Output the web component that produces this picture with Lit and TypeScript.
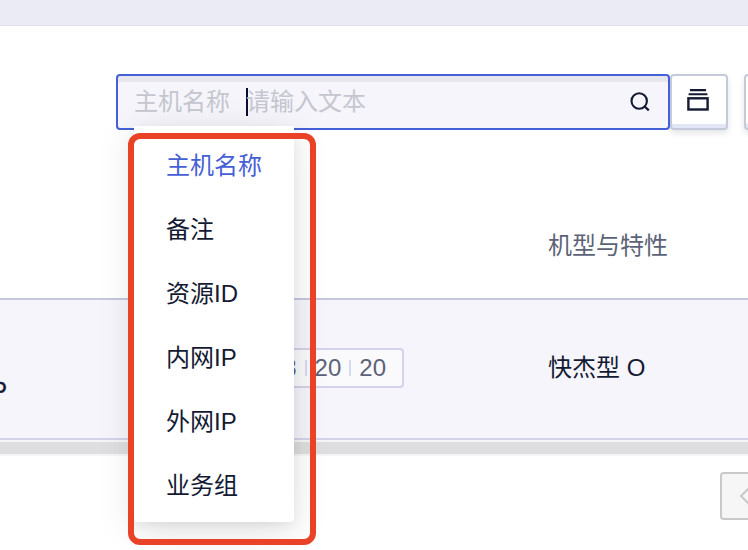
import { LitElement, html, css, svg } from "lit";
import { customElement, property } from "lit/decorators.js";
import { classMap } from "lit/directives/class-map.js";

const searchIcon = svg`<svg width="20" height="20" viewBox="0 0 20 20" fill="none" stroke="#141a33" stroke-width="2.1"><circle cx="9.2" cy="9" r="7.7"/><path d="M14.4 14.2L18.8 18.4" stroke-width="2.2"/></svg>`;
const stackIcon = svg`<svg width="22" height="22" viewBox="0 0 22 22" fill="none" stroke="#141a33" stroke-width="2.1"><path d="M3 1.1H19M1.6 5.2H20.4"/><rect x="1.4" y="9.3" width="19.2" height="11.2" stroke-width="2.4"/></svg>`;
const chevron = svg`<svg width="16" height="20" viewBox="0 0 16 20" fill="none" stroke="#c9c9c9" stroke-width="2"><path d="M11 1L2 10L11 19"/></svg>`;

@customElement("search-menu")
class SearchMenu extends LitElement {
  @property({ type: Array }) items: string[] = [];
  @property() selected = "";
  static styles = css`
    :host { display: block; background: #fff; height: 396px; width: 160px; box-sizing: border-box; padding-top: 8px;
      border-radius: 0 0 4px 4px; box-shadow: 0 4px 10px rgba(0,0,0,.05), 0 8px 36px rgba(0,0,0,.13); }
    .item { height: 64px; line-height: 64px; padding-left: 32px; font-size: 24px; color: #141a33; white-space: nowrap; }
    .on { color: #4560d6; }
  `;
  render() {
    return this.items.map(
      (i) => html`<div class=${classMap({ item: true, on: i === this.selected })}>${i}</div>`
    );
  }
}

@customElement("app-root")
class AppRoot extends LitElement {
  static styles = css`
    * { box-sizing: border-box; }
    :host { display: block; position: relative; width: 748px; height: 550px; overflow: hidden; background: #fff;
      font-family: "Liberation Sans", "Noto Sans CJK SC", sans-serif; font-size: 24px; color: #141a33; }
    svg { display: block; }
    .top { height: 26px; background: #ebebf5; border-bottom: 1px solid #dfdfe6; }
    .toolbar { display: flex; height: 104px; padding: 48px 0 0 116px; }
    .field { position: relative; flex: none; width: 554px; height: 56px; display: flex; align-items: center; padding: 0 18px 0 16px;
      border: 2px solid #4560d6; border-radius: 4px; background: #f5f5fb; box-shadow: inset 0 6px 0 #e7e6ec; color: #c5c6cf; }
    .key { width: 112px; line-height: 52px; }
    .caret { width: 2px; height: 28px; background: #071030; }
    .hint { flex: 1; margin-left: -2px; line-height: 52px; }
    search-menu { position: absolute; left: 16px; top: 50px; z-index: 2; }
    .btn { flex: none; width: 58px; height: 56px; display: flex; justify-content: center; padding: 13px 2px 0 0; border: 2px solid #c5cadb;
      border-radius: 4px; background: #fff; box-shadow: inset 0 -4px 0 #e3e6f6, 0 3px 6px rgba(20,26,51,.12); }
    .next { margin-left: 16px; }
    .head { height: 170px; border-bottom: 2px solid #c4c8dc; padding: 98px 0 0 548px; line-height: 36px; color: #5c6378; }
    .row { display: grid; grid-template-columns: 204px 344px 200px; align-items: center; height: 140px; background: #f5f5fb; border-bottom: 2px solid #d3d3e9; }
    .ip { margin: 44px 0 0 -9px; font-size: 24px; line-height: 30px; -webkit-text-stroke: .4px #141a33; }
    .model { line-height: 36px; margin-top: -2px; }
    .specs { width: 200px; height: 40px; margin-top: -2px; display: flex; justify-content: flex-end; align-items: center; padding-right: 16px;
      border: 2px solid #d3d3e9; border-radius: 4px; background: #fafafd; color: #5c6378; }
    .sep { width: 2px; height: 16px; margin: 0 8px; background: #d5dbee; }
    .scroll { height: 16px; border: solid #f6f6f8; border-width: 2px 0; background: #dedede; }
    .foot { display: flex; justify-content: flex-end; padding-top: 16px; }
    .page { flex: none; width: 48px; height: 48px; margin-right: -20px; display: flex; align-items: center; justify-content: center; padding-left: 5px;
      border: 2px solid #c9c9c9; border-radius: 4px; background: #f6f6f6; }
    .mark { position: absolute; left: 128px; top: 133px; width: 188px; height: 412px; border: 6px solid #e94227; border-radius: 12px; z-index: 3; }
  `;
  render() {
    return html`
      <div class="top"></div>
      <div class="toolbar">
        <div class="field">
          <span class="key">主机名称</span><span class="caret"></span><span class="hint">请输入文本</span>${searchIcon}
          <search-menu selected="主机名称" .items=${["主机名称", "备注", "资源ID", "内网IP", "外网IP", "业务组"]}></search-menu>
        </div>
        <div class="btn">${stackIcon}</div>
        <div class="btn next"></div>
      </div>
      <div class="head">机型与特性</div>
      <div class="row">
        <div class="ip">P</div>
        <div class="specs">
          ${["203", "20", "20"].map((v, i) => html`${i ? html`<span class="sep"></span>` : ""}<span>${v}</span>`)}
        </div>
        <div class="model">快杰型 O</div>
      </div>
      <div class="scroll"></div>
      <div class="foot"><div class="page">${chevron}</div></div>
      <div class="mark"></div>
    `;
  }
}
